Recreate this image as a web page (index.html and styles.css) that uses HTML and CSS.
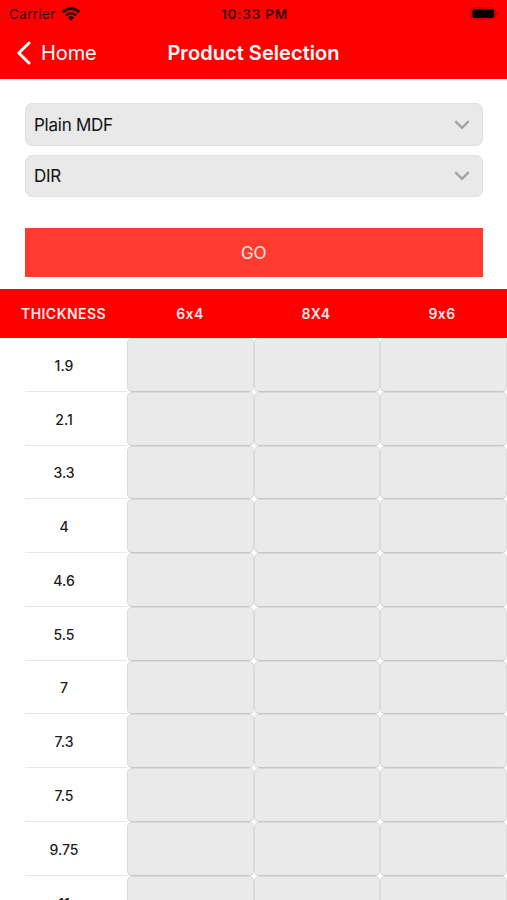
FILE: index.html
```
<!DOCTYPE html>
<html lang="en">
<head>
  <meta charset="UTF-8">
  <meta name="viewport" content="width=device-width, initial-scale=1.0">
  <title>Product Selection</title>
  <link rel="stylesheet" href="styles.css">
</head>
<body>
  <header class="header">
    <div class="status-bar">
      <div class="carrier">
        <span class="carrier-name">Carrier</span>
        <svg class="wifi" width="18" height="14" viewBox="0 0 18 14" fill="none" stroke="#200" stroke-width="2.7">
          <path d="M.8 5.2C5.3 .5 12.7 .5 17.2 5.2"/>
          <path d="M3.9 8.4C6.7 5.5 11.3 5.5 14.1 8.4"/>
          <path d="M9 13.8L5.8 10.6C7.5 8.9 10.5 8.9 12.2 10.6Z" fill="#200" stroke="none"/>
        </svg>
      </div>
      <span class="clock">10:33 PM</span>
      <svg class="battery" width="30" height="13" viewBox="0 0 30 13">
        <rect x=".8" y=".8" width="25" height="11.4" rx="3.4" fill="none" stroke="#b00000"/>
        <rect x="2.4" y="2.2" width="21.8" height="8.8" rx="2" fill="#000"/>
        <path d="M27.3 4.6Q29.4 6.5 27.3 8.4Z" fill="#a00000"/>
      </svg>
    </div>
    <nav class="nav-bar">
      <a class="back" href="#">
        <svg width="15" height="24" viewBox="0 0 15 24" fill="none" stroke="#fff" stroke-width="3" stroke-linecap="round" stroke-linejoin="round">
          <path d="M13 2L2.8 12L13 22"/>
        </svg>
        <span class="back-label">Home</span>
      </a>
      <h1 class="title">Product Selection</h1>
    </nav>
  </header>

  <main>
    <div class="form">
      <div class="select">
        <span>Plain MDF</span>
        <svg class="chevron" width="16" height="10" viewBox="0 0 16 10"><path d="M2 1.8L8 7.8L14 1.8"/></svg>
      </div>
      <div class="select">
        <span>DIR</span>
        <svg class="chevron" width="16" height="10" viewBox="0 0 16 10"><path d="M2 1.8L8 7.8L14 1.8"/></svg>
      </div>
      <button class="go">GO</button>
    </div>

    <div class="grid grid-head">
      <span>THICKNESS</span>
      <span>6x4</span>
      <span>8X4</span>
      <span>9x6</span>
    </div>
    <div class="rows">
      <div class="grid row"><div class="label">1.9</div><div class="cell"></div><div class="cell"></div><div class="cell"></div></div>
      <div class="grid row"><div class="label">2.1</div><div class="cell"></div><div class="cell"></div><div class="cell"></div></div>
      <div class="grid row"><div class="label">3.3</div><div class="cell"></div><div class="cell"></div><div class="cell"></div></div>
      <div class="grid row"><div class="label">4</div><div class="cell"></div><div class="cell"></div><div class="cell"></div></div>
      <div class="grid row"><div class="label">4.6</div><div class="cell"></div><div class="cell"></div><div class="cell"></div></div>
      <div class="grid row"><div class="label">5.5</div><div class="cell"></div><div class="cell"></div><div class="cell"></div></div>
      <div class="grid row"><div class="label">7</div><div class="cell"></div><div class="cell"></div><div class="cell"></div></div>
      <div class="grid row"><div class="label">7.3</div><div class="cell"></div><div class="cell"></div><div class="cell"></div></div>
      <div class="grid row"><div class="label">7.5</div><div class="cell"></div><div class="cell"></div><div class="cell"></div></div>
      <div class="grid row"><div class="label">9.75</div><div class="cell"></div><div class="cell"></div><div class="cell"></div></div>
      <div class="grid row"><div class="label">11</div><div class="cell"></div><div class="cell"></div><div class="cell"></div></div>
    </div>
  </main>
</body>
</html>
```

FILE: styles.css
```
* {
  margin: 0;
  padding: 0;
  box-sizing: border-box;
}

body {
  height: 900px;
  overflow: hidden;
  background: #fff;
  color: #1c1c1c;
  font-family: Inter, "Liberation Sans", sans-serif;
}

.header {
  height: 79px;
  background: #ff0000;
}

/* Status bar */
.status-bar {
  display: grid;
  grid-template-columns: 1fr auto 1fr;
  align-items: center;
  height: 27px;
  padding: 0 7px 0 9px;
  font-size: 13.5px;
  color: #300;
}

.carrier {
  display: flex;
  align-items: center;
  gap: 6px;
}

.carrier-name {
  letter-spacing: 0.35px;
}

.clock {
  font-weight: 600;
  font-size: 13.5px;
  letter-spacing: 0.8px;
}

.battery {
  justify-self: end;
}

/* Navigation bar */
.nav-bar {
  display: grid;
  grid-template-columns: 1fr auto 1fr;
  align-items: center;
  height: 51px;
  padding: 0 16px;
  color: #fff;
}

.back {
  display: flex;
  align-items: center;
  gap: 10px;
  color: #fff;
  text-decoration: none;
  font-size: 20px;
}

.back-label {
  letter-spacing: -0.1px;
}

.title {
  font-size: 20px;
  font-weight: 600;
  letter-spacing: 0.05px;
}

/* Form */
.form {
  display: flex;
  flex-direction: column;
  height: 210px;
  padding: 24px 24.5px 0 25px;
}

.select {
  display: flex;
  justify-content: space-between;
  align-items: center;
  height: 42.5px;
  margin-bottom: 9px;
  padding: 1px 12px 0 8px;
  border: 1px solid #e0e0e0;
  border-radius: 7px;
  background: #e9e9e9;
  color: #111;
  font-size: 17px;
  letter-spacing: -0.25px;
}

.chevron {
  fill: none;
  stroke: #a2a2a2;
  stroke-width: 2.4;
  stroke-linecap: round;
}

.go {
  height: 49px;
  margin-top: 22px;
  border: none;
  background: #ff3b30;
  color: #ffe5e2;
  font-family: inherit;
  font-size: 17px;
}

/* Table */
.grid {
  display: grid;
  grid-template-columns: 127px repeat(3, 126.67px);
}

.grid-head {
  grid-template-columns: 127px repeat(3, 126px);
  align-items: center;
  height: 49px;
  background: #ff0000;
  color: #ffeaea;
  font-size: 14px;
  font-weight: 600;
  text-align: center;
  letter-spacing: 0.45px;
}

.row {
  height: 53.78px;
}

.label {
  display: flex;
  justify-content: center;
  align-items: center;
  margin-left: 25px;
  padding: 2px 24px 0 0;
  border-bottom: 1px solid #e6e6e6;
  font-size: 14px;
  font-weight: 500;
}

.cell {
  border: 1px solid #dadada;
  border-bottom-color: #c6c6c6;
  border-radius: 5px;
  background: #eaeaea;
}
```
